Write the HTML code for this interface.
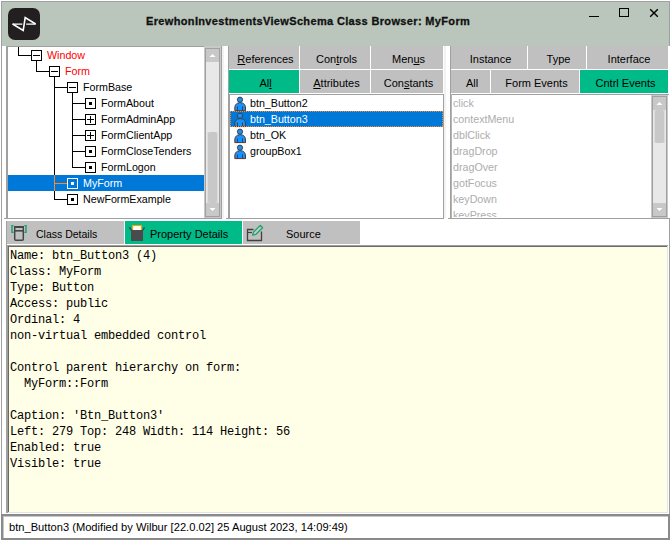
<!DOCTYPE html>
<html><head><meta charset="utf-8">
<style>
*{box-sizing:border-box;margin:0;padding:0}
html,body{width:671px;height:541px;overflow:hidden;background:#fff}
body{position:relative;font-family:"Liberation Sans",sans-serif;font-size:11px;color:#000}
.a{position:absolute}
.frame{left:1px;top:1px;width:669px;height:539px;border:1px solid #a0a0a0;border-bottom:none}
.title{left:2px;top:2px;width:667px;height:44px;background:#bac5bc}
.logo{left:8px;top:8px;width:32px;height:32px;background:#231f20;border-radius:7px}
.ttxt{left:146px;top:15px;-webkit-text-stroke:0.3px #111;font-weight:bold;font-size:11px;letter-spacing:0.35px;white-space:nowrap;color:#111}
.tab{position:absolute;background:#c0c0c0;text-align:center;white-space:nowrap;line-height:27px;padding-left:3px}
.tab.g{background:#00ba88}
u{text-decoration:underline;text-decoration-thickness:1px;text-underline-offset:1px}
.row{position:absolute;height:16px;line-height:16px;white-space:nowrap;font-size:10.7px}
.mono{font-family:"Liberation Mono",monospace;font-size:12px;letter-spacing:-0.2px;line-height:16px;white-space:pre;color:#000;}
</style></head><body>
<div class="a frame"></div>
<div class="a title"></div>
<div class="a logo">
<svg width="32" height="32" viewBox="8 8 32 32" style="position:absolute;left:0;top:0">
<path d="M12.6 24 L23.2 30.4 L25.2 17.6 L35.6 24" fill="none" stroke="#fff" stroke-width="1.6" stroke-linejoin="miter" stroke-miterlimit="4"/><path d="M12.6 24.1 H22.3 M26.2 24.1 H35.6" fill="none" stroke="#fff" stroke-width="1.2"/>
</svg>
</div>
<div class="a ttxt">ErewhonInvestmentsViewSchema Class Browser: MyForm</div>
<!-- window buttons -->
<div class="a" style="left:589px;top:16px;width:10px;height:1px;background:#000"></div>
<div class="a" style="left:619px;top:8px;width:10px;height:9px;border:1px solid #000"></div>
<svg class="a" style="left:649px;top:8px" width="10" height="10" viewBox="0 0 10 10"><path d="M1.2 1.2L8.8 8.8M8.8 1.2L1.2 8.8" stroke="#000" stroke-width="1.4"/></svg>

<!-- tree panel -->
<div class="a" style="left:6px;top:46px;width:216px;height:173px;border-left:2px solid #a0a0a0;border-bottom:1px solid #a0a0a0;border-top:1px solid #a0a0a0;border-right:2px solid #a0a0a0;background:#fff;overflow:hidden">
</div>
<div id="tree" class="a" style="left:8px;top:47px;width:196px;height:171px;overflow:hidden">
<svg class="a" style="left:-8px;top:-47px" width="671" height="541" viewBox="0 0 671 541"><rect x="8" y="175" width="196" height="16" fill="#0078d7"/><rect x="18" y="47" width="1" height="9" fill="#000"/><rect x="18" y="55" width="13" height="1" fill="#000"/><rect x="36" y="61" width="1" height="11" fill="#000"/><rect x="36" y="71" width="13" height="1" fill="#000"/><rect x="54" y="77" width="1" height="98" fill="#000"/><rect x="54" y="175" width="1" height="16" fill="#ff8728"/><rect x="54" y="191" width="1" height="9" fill="#000"/><rect x="54" y="87" width="13" height="1" fill="#000"/><rect x="54" y="183" width="13" height="1" fill="#ff8728"/><rect x="54" y="199" width="13" height="1" fill="#000"/><rect x="72" y="93" width="1" height="75" fill="#000"/><rect x="72" y="103" width="13" height="1" fill="#000"/><rect x="72" y="119" width="13" height="1" fill="#000"/><rect x="72" y="135" width="13" height="1" fill="#000"/><rect x="72" y="151" width="13" height="1" fill="#000"/><rect x="72" y="167" width="13" height="1" fill="#000"/><rect x="31.5" y="50.5" width="10" height="10" fill="none" stroke="#000" stroke-width="1"/><rect x="33" y="55" width="7" height="1" fill="#000"/><rect x="49.5" y="66.5" width="10" height="10" fill="none" stroke="#000" stroke-width="1"/><rect x="51" y="71" width="7" height="1" fill="#000"/><rect x="67.5" y="82.5" width="10" height="10" fill="none" stroke="#000" stroke-width="1"/><rect x="69" y="87" width="7" height="1" fill="#000"/><rect x="85.5" y="98.5" width="10" height="10" fill="none" stroke="#000" stroke-width="1"/><rect x="89" y="102" width="3" height="3" fill="#000"/><rect x="85.5" y="114.5" width="10" height="10" fill="none" stroke="#000" stroke-width="1"/><rect x="87" y="119" width="7" height="1" fill="#000"/><rect x="90" y="116" width="1" height="7" fill="#000"/><rect x="85.5" y="130.5" width="10" height="10" fill="none" stroke="#000" stroke-width="1"/><rect x="87" y="135" width="7" height="1" fill="#000"/><rect x="90" y="132" width="1" height="7" fill="#000"/><rect x="85.5" y="146.5" width="10" height="10" fill="none" stroke="#000" stroke-width="1"/><rect x="89" y="150" width="3" height="3" fill="#000"/><rect x="85.5" y="162.5" width="10" height="10" fill="none" stroke="#000" stroke-width="1"/><rect x="89" y="166" width="3" height="3" fill="#000"/><rect x="67.5" y="178.5" width="10" height="10" fill="none" stroke="#fff" stroke-width="1"/><rect x="71" y="182" width="3" height="3" fill="#fff"/><rect x="67.5" y="194.5" width="10" height="10" fill="none" stroke="#000" stroke-width="1"/><rect x="71" y="198" width="3" height="3" fill="#000"/></svg>
<div class="row" style="left:39px;top:0px;color:#ff0000">Window</div>
<div class="row" style="left:57px;top:16px;color:#ff0000">Form</div>
<div class="row" style="left:75px;top:32px;color:#000">FormBase</div>
<div class="row" style="left:93px;top:48px;color:#000">FormAbout</div>
<div class="row" style="left:93px;top:64px;color:#000">FormAdminApp</div>
<div class="row" style="left:93px;top:80px;color:#000">FormClientApp</div>
<div class="row" style="left:93px;top:96px;color:#000">FormCloseTenders</div>
<div class="row" style="left:93px;top:112px;color:#000">FormLogon</div>
<div class="row" style="left:75px;top:128px;color:#fff">MyForm</div>
<div class="row" style="left:75px;top:144px;color:#000">NewFormExample</div>
</div>
<!-- tree scrollbar -->
<div class="a" style="left:204px;top:46px;width:17px;height:172px;border:1px solid #c8c8c8;background:#e8e8e8"></div>
<div class="a" style="left:205px;top:47px;width:15px;height:1px;background:#c8c8c8"></div>
<div class="a" style="left:205px;top:48px;width:15px;height:169px;border:1px solid #a0a0a0"></div>
<div class="a" style="left:206px;top:49px;width:13px;height:13px;background:#c8c8c8"></div>
<div class="a" style="left:206px;top:203px;width:13px;height:13px;background:#c8c8c8"></div>
<svg class="a" style="left:206px;top:49px" width="13" height="13"><path d="M3.5 8 L9.5 8 L6.5 5 Z" fill="#fff"/></svg>
<svg class="a" style="left:206px;top:203px" width="13" height="13"><path d="M3.5 5 L9.5 5 L6.5 8 Z" fill="#fff"/></svg>
<div class="a" style="left:207px;top:132px;width:11px;height:71px;background:#c8c8c8;border-radius:2px;box-shadow:inset 1px 0 0 #dcdcdc, inset -1px 0 0 #dcdcdc"></div>


<!-- middle panel -->
<div class="a" style="left:228px;top:46px;width:216px;height:173px;border-left:1px solid #a0a0a0;border-bottom:1px solid #a0a0a0;background:#fff"></div>
<div class="a" style="left:443px;top:94px;width:1px;height:125px;background:#a0a0a0"></div>
<div class="a" style="left:444px;top:46px;width:2px;height:172px;background:#f2f2f2"></div>
<div class="a" style="left:222px;top:46px;width:2px;height:172px;background:#f2f2f2"></div>

<div class="tab" style="left:229px;top:46px;width:70px;height:23px"><u>R</u>eferences</div>
<div class="tab" style="left:300px;top:46px;width:70px;height:23px">Con<u>t</u>rols</div>
<div class="tab" style="left:371px;top:46px;width:72px;height:23px">Men<u>u</u>s</div>
<div class="tab g" style="left:229px;top:70px;width:70px;height:23px">Al<u>l</u></div>
<div class="tab" style="left:300px;top:70px;width:70px;height:23px"><u>A</u>ttributes</div>
<div class="tab" style="left:371px;top:70px;width:72px;height:23px">Con<u>s</u>tants</div>
<div class="a" style="left:229px;top:94px;width:214px;height:1px;background:#a0a0a0"></div>
<svg class="a" style="left:0;top:0" width="671" height="541">
<rect x="230" y="111" width="213" height="16" fill="#0078d7"/>
<g fill="#1492ff" stroke="#4a3c38" stroke-width="1"><circle cx="240" cy="99.7" r="2.6"/><path d="M234.8 110.6 L234.8 108.0 C234.8 104.2 237.2 102.7 240.2 102.7 C243.2 102.7 245.5 104.2 245.5 108.0 L245.5 110.6 Z"/><path d="M237.5 106.5 V110.6 M242.5 106.5 V110.6" fill="none"/></g>
<g fill="#1492ff" stroke="#4a3c38" stroke-width="1"><circle cx="240" cy="115.7" r="2.6"/><path d="M234.8 126.6 L234.8 124.0 C234.8 120.2 237.2 118.7 240.2 118.7 C243.2 118.7 245.5 120.2 245.5 124.0 L245.5 126.6 Z"/><path d="M237.5 122.5 V126.6 M242.5 122.5 V126.6" fill="none"/></g>
<g fill="#1492ff" stroke="#4a3c38" stroke-width="1"><circle cx="240" cy="131.7" r="2.6"/><path d="M234.8 142.6 L234.8 140.0 C234.8 136.2 237.2 134.7 240.2 134.7 C243.2 134.7 245.5 136.2 245.5 140.0 L245.5 142.6 Z"/><path d="M237.5 138.5 V142.6 M242.5 138.5 V142.6" fill="none"/></g>
<g fill="#1492ff" stroke="#4a3c38" stroke-width="1"><circle cx="240" cy="147.7" r="2.6"/><path d="M234.8 158.6 L234.8 156.0 C234.8 152.2 237.2 150.7 240.2 150.7 C243.2 150.7 245.5 152.2 245.5 156.0 L245.5 158.6 Z"/><path d="M237.5 154.5 V158.6 M242.5 154.5 V158.6" fill="none"/></g>
</svg>
<div class="a" style="left:230px;top:111px;width:213px;height:1px;background:repeating-linear-gradient(90deg,#ff8728 0 1px,transparent 1px 2px)"></div>
<div class="a" style="left:230px;top:126px;width:213px;height:1px;background:repeating-linear-gradient(90deg,#ff8728 0 1px,transparent 1px 2px)"></div>
<div class="a" style="left:230px;top:111px;width:1px;height:16px;background:repeating-linear-gradient(180deg,#ff8728 0 1px,transparent 1px 2px)"></div>
<div class="a" style="left:442px;top:111px;width:1px;height:16px;background:repeating-linear-gradient(180deg,#ff8728 0 1px,transparent 1px 2px)"></div>
<div class="row" style="left:250px;top:95px;color:#000;font-size:10.7px">btn_Button2</div>
<div class="row" style="left:250px;top:111px;color:#fff;font-size:10.7px">btn_Button3</div>
<div class="row" style="left:250px;top:127px;color:#000;font-size:10.7px">btn_OK</div>
<div class="row" style="left:250px;top:143px;color:#000;font-size:10.7px">groupBox1</div>


<!-- right panel -->
<div class="a" style="left:450px;top:46px;width:220px;height:173px;border-left:1px solid #a0a0a0;border-bottom:1px solid #a0a0a0;background:#fff"></div>
<div class="tab" style="left:451px;top:46px;width:76px;height:23px">Instance</div>
<div class="tab" style="left:528px;top:46px;width:58px;height:23px">Type</div>
<div class="tab" style="left:587px;top:46px;width:81px;height:23px">Interface</div>
<div class="tab" style="left:451px;top:70px;width:39px;height:23px">All</div>
<div class="tab" style="left:491px;top:70px;width:88px;height:23px">Form Events</div>
<div class="tab g" style="left:580px;top:70px;width:88px;height:23px">Cntrl Events</div>
<div class="a" style="left:451px;top:94px;width:218px;height:1px;background:#a0a0a0"></div>
<div class="a" style="left:651px;top:95px;width:17px;height:123px;border:1px solid #c8c8c8;background:#e8e8e8"></div>
<div class="a" style="left:652px;top:96px;width:15px;height:121px;border:1px solid #a0a0a0"></div>
<div class="a" style="left:653px;top:97px;width:13px;height:13px;background:#c8c8c8"></div>
<div class="a" style="left:653px;top:203px;width:13px;height:13px;background:#c8c8c8"></div>
<svg class="a" style="left:653px;top:97px" width="13" height="13"><path d="M3.5 8 L9.5 8 L6.5 5 Z" fill="#fff"/></svg>
<svg class="a" style="left:653px;top:203px" width="13" height="13"><path d="M3.5 5 L9.5 5 L6.5 8 Z" fill="#fff"/></svg>
<div class="a" style="left:654px;top:110px;width:11px;height:33px;background:#c8c8c8;border-radius:2px;box-shadow:inset 1px 0 0 #dcdcdc, inset -1px 0 0 #dcdcdc"></div>


<div class="a" style="left:451px;top:95px;width:200px;height:122px;overflow:hidden">
<div class="row" style="left:2px;top:0px;color:#adadad;font-size:10.7px">click</div>
<div class="row" style="left:2px;top:16px;color:#adadad;font-size:10.7px">contextMenu</div>
<div class="row" style="left:2px;top:32px;color:#adadad;font-size:10.7px">dblClick</div>
<div class="row" style="left:2px;top:48px;color:#adadad;font-size:10.7px">dragDrop</div>
<div class="row" style="left:2px;top:64px;color:#adadad;font-size:10.7px">dragOver</div>
<div class="row" style="left:2px;top:80px;color:#adadad;font-size:10.7px">gotFocus</div>
<div class="row" style="left:2px;top:96px;color:#adadad;font-size:10.7px">keyDown</div>
<div class="row" style="left:2px;top:112px;color:#adadad;font-size:10.7px">keyPress</div>
</div>
<div class="a" style="left:229px;top:94px;width:1px;height:124px;background:#a0a0a0"></div>
<div class="a" style="left:451px;top:94px;width:1px;height:124px;background:#b4b4b4"></div>
<!-- bottom tabs -->
<div class="a" style="left:4px;top:218px;width:218px;height:1px;background:#a0a0a0"></div>
<div class="a" style="left:226px;top:218px;width:218px;height:1px;background:#a0a0a0"></div>
<div class="a" style="left:448px;top:218px;width:222px;height:1px;background:#a0a0a0"></div>

<div class="a" style="left:6px;top:221px;width:1px;height:26px;background:#a0a0a0"></div>
<div class="tab" style="left:7px;top:221px;width:117px;height:23px"></div>
<div class="tab g" style="left:125px;top:221px;width:117px;height:23px"></div>
<div class="tab" style="left:243px;top:221px;width:117px;height:23px"></div>
<div class="a" style="left:6px;top:245px;width:662px;height:1px;background:#a0a0a0"></div>
<div class="a" style="left:6px;top:245px;width:2px;height:268px;background:#a0a0a0"></div>
<div class="a" style="left:8px;top:246px;width:660px;height:1px;background:#696969"></div>
<div class="a" style="left:8px;top:246px;width:1px;height:266px;background:#696969"></div>
<div class="a" style="left:667px;top:246px;width:1px;height:267px;background:#e3e3e3"></div>
<div class="a" style="left:8px;top:512px;width:660px;height:1px;background:#e3e3e3"></div>
<div class="a" style="left:9px;top:247px;width:658px;height:265px;background:#fffee6"></div>
<div class="a" style="left:36px;top:223px;line-height:23px;font-size:10.5px">Class Details</div>
<div class="a" style="left:150px;top:223px;line-height:23px">Property Details</div>
<div class="a" style="left:286px;top:223px;line-height:23px">Source</div>
<svg class="a" style="left:0;top:0" width="400" height="250">
<g fill="none" stroke="#13a06a" stroke-width="1.4">
<path d="M13.6 225.6 H12 V232.4 H13.6"/>
<path d="M24.4 225.6 H26 V232.4 H24.4"/>
</g>
<rect x="14.7" y="226.7" width="8.6" height="13.6" rx="1" fill="none" stroke="#454545" stroke-width="1.5"/>
<rect x="14" y="226" width="10" height="2" fill="#454545"/>
<rect x="14" y="230" width="10" height="1.6" fill="#454545"/>
<rect x="132.6" y="225.6" width="8.8" height="6" fill="#fff" stroke="#ffa000" stroke-width="1.1"/>
<rect x="131" y="230" width="12" height="11" fill="#4b4a4c"/>
<path d="M129.3 227.3 L131.8 230.8 M144.6 227.3 L142.2 230.8" stroke="#4b4a4c" stroke-width="1.5" fill="none"/>
<path d="M253.5 229.5 H247.5 V240.5 H261.5 V231.5" fill="none" stroke="#404040" stroke-width="1.3"/>
<path d="M247.5 232.5 H252" stroke="#404040" stroke-width="1.2"/>
<path d="M252.6 235.2 L253.6 232 L260.3 225.4 L262.6 227.7 L256 234.3 Z" fill="#c8c8c8" stroke="#1aa46e" stroke-width="1.3" stroke-linejoin="round"/>
</svg>

<div class="a mono" style="left:10px;top:248px">Name: btn_Button3 (4)
Class: MyForm
Type: Button
Access: public
Ordinal: 4
non-virtual embedded control

Control parent hierarchy on form:
  MyForm::Form

Caption: 'Btn_Button3'
Left: 279 Top: 248 Width: 114 Height: 56
Enabled: true
Visible: true</div>

<!-- status bar -->
<div class="a" style="left:1px;top:514px;width:669px;height:26px;border:2px solid #8a8a8a;background:#fff;box-shadow:inset 1px 1px 0 #c8c8c8"></div>
<div class="a" style="left:9px;top:519px;line-height:16px;white-space:nowrap;font-size:11.15px">btn_Button3 (Modified by Wilbur [22.0.02] 25 August 2023, 14:09:49)</div>
</body></html>
